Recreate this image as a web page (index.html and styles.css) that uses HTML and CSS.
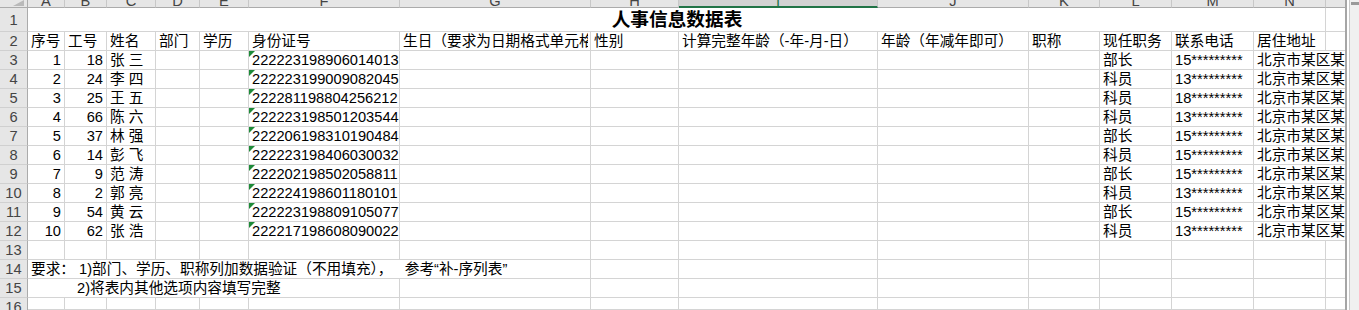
FILE: index.html
```html
<!DOCTYPE html>
<html lang="zh-CN">
<head>
<meta charset="utf-8">
<title>人事信息数据表</title>
<link rel="stylesheet" href="styles.css">
</head>
<body>
<div class="sheet">
  <div class="grid">
    <!-- column headers -->
    <div class="corner"><span class="corner-tri"></span></div>
    <div class="ch"><span>A</span></div>
    <div class="ch"><span>B</span></div>
    <div class="ch"><span>C</span></div>
    <div class="ch"><span>D</span></div>
    <div class="ch"><span>E</span></div>
    <div class="ch"><span>F</span></div>
    <div class="ch"><span>G</span></div>
    <div class="ch"><span>H</span></div>
    <div class="ch sel"><span>I</span></div>
    <div class="ch"><span>J</span></div>
    <div class="ch"><span>K</span></div>
    <div class="ch"><span>L</span></div>
    <div class="ch"><span>M</span></div>
    <div class="ch"><span>N</span></div>
    <div class="ch last"></div>

    <!-- row 1 -->
    <div class="rh r1">1</div>
    <div class="c title">人事信息数据表</div>
    <div class="c last"></div>

    <!-- row 2 -->
    <div class="rh">2</div>
    <div class="c">序号</div>
    <div class="c">工号</div>
    <div class="c">姓名</div>
    <div class="c">部门</div>
    <div class="c">学历</div>
    <div class="c">身份证号</div>
    <div class="c"><span class="clip">生日（要求为日期格式单元格）</span></div>
    <div class="c">性别</div>
    <div class="c">计算完整年龄（-年-月-日）</div>
    <div class="c">年龄（年减年即可）</div>
    <div class="c">职称</div>
    <div class="c">现任职务</div>
    <div class="c">联系电话</div>
    <div class="c">居住地址</div>
    <div class="c last"></div>

    <!-- row 3 -->
    <div class="rh">3</div>
    <div class="c num">1</div><div class="c num">18</div><div class="c name">张 三</div><div class="c"></div><div class="c"></div>
    <div class="c txt">222223198906014013</div><div class="c"></div><div class="c"></div><div class="c"></div><div class="c"></div><div class="c"></div>
    <div class="c">部长</div><div class="c">15*********</div><div class="c addr">北京市某区某街道某号</div>

    <!-- row 4 -->
    <div class="rh">4</div>
    <div class="c num">2</div><div class="c num">24</div><div class="c name">李 四</div><div class="c"></div><div class="c"></div>
    <div class="c txt">222223199009082045</div><div class="c"></div><div class="c"></div><div class="c"></div><div class="c"></div><div class="c"></div>
    <div class="c">科员</div><div class="c">13*********</div><div class="c addr">北京市某区某街道某号</div>

    <!-- row 5 -->
    <div class="rh">5</div>
    <div class="c num">3</div><div class="c num">25</div><div class="c name">王 五</div><div class="c"></div><div class="c"></div>
    <div class="c txt">222281198804256212</div><div class="c"></div><div class="c"></div><div class="c"></div><div class="c"></div><div class="c"></div>
    <div class="c">科员</div><div class="c">18*********</div><div class="c addr">北京市某区某街道某号</div>

    <!-- row 6 -->
    <div class="rh">6</div>
    <div class="c num">4</div><div class="c num">66</div><div class="c name">陈 六</div><div class="c"></div><div class="c"></div>
    <div class="c txt">222223198501203544</div><div class="c"></div><div class="c"></div><div class="c"></div><div class="c"></div><div class="c"></div>
    <div class="c">科员</div><div class="c">13*********</div><div class="c addr">北京市某区某街道某号</div>

    <!-- row 7 -->
    <div class="rh">7</div>
    <div class="c num">5</div><div class="c num">37</div><div class="c name">林 强</div><div class="c"></div><div class="c"></div>
    <div class="c txt">222206198310190484</div><div class="c"></div><div class="c"></div><div class="c"></div><div class="c"></div><div class="c"></div>
    <div class="c">部长</div><div class="c">15*********</div><div class="c addr">北京市某区某街道某号</div>

    <!-- row 8 -->
    <div class="rh">8</div>
    <div class="c num">6</div><div class="c num">14</div><div class="c name">彭 飞</div><div class="c"></div><div class="c"></div>
    <div class="c txt">222223198406030032</div><div class="c"></div><div class="c"></div><div class="c"></div><div class="c"></div><div class="c"></div>
    <div class="c">科员</div><div class="c">15*********</div><div class="c addr">北京市某区某街道某号</div>

    <!-- row 9 -->
    <div class="rh">9</div>
    <div class="c num">7</div><div class="c num">9</div><div class="c name">范 涛</div><div class="c"></div><div class="c"></div>
    <div class="c txt">222202198502058811</div><div class="c"></div><div class="c"></div><div class="c"></div><div class="c"></div><div class="c"></div>
    <div class="c">部长</div><div class="c">15*********</div><div class="c addr">北京市某区某街道某号</div>

    <!-- row 10 -->
    <div class="rh">10</div>
    <div class="c num">8</div><div class="c num">2</div><div class="c name">郭 亮</div><div class="c"></div><div class="c"></div>
    <div class="c txt">222224198601180101</div><div class="c"></div><div class="c"></div><div class="c"></div><div class="c"></div><div class="c"></div>
    <div class="c">科员</div><div class="c">13*********</div><div class="c addr">北京市某区某街道某号</div>

    <!-- row 11 -->
    <div class="rh">11</div>
    <div class="c num">9</div><div class="c num">54</div><div class="c name">黄 云</div><div class="c"></div><div class="c"></div>
    <div class="c txt">222223198809105077</div><div class="c"></div><div class="c"></div><div class="c"></div><div class="c"></div><div class="c"></div>
    <div class="c">部长</div><div class="c">15*********</div><div class="c addr">北京市某区某街道某号</div>

    <!-- row 12 -->
    <div class="rh">12</div>
    <div class="c num">10</div><div class="c num">62</div><div class="c name">张 浩</div><div class="c"></div><div class="c"></div>
    <div class="c txt">222217198608090022</div><div class="c"></div><div class="c"></div><div class="c"></div><div class="c"></div><div class="c"></div>
    <div class="c">科员</div><div class="c">13*********</div><div class="c addr">北京市某区某街道某号</div>

    <!-- row 13 -->
    <div class="rh">13</div>
    <div class="c"></div><div class="c"></div><div class="c"></div><div class="c"></div><div class="c"></div>
    <div class="c"></div><div class="c"></div><div class="c"></div><div class="c"></div><div class="c"></div>
    <div class="c"></div><div class="c"></div><div class="c"></div><div class="c"></div><div class="c last"></div>

    <!-- row 14 -->
    <div class="rh">14</div>
    <div class="c note1">要求： 1)部门、学历、职称列加数据验证（不用填充），   参考“补-序列表”</div>
    <div class="c"></div><div class="c"></div><div class="c"></div><div class="c"></div>
    <div class="c"></div><div class="c"></div><div class="c"></div><div class="c last"></div>

    <!-- row 15 -->
    <div class="rh">15</div>
    <div class="c note2">2)将表内其他选项内容填写完整</div>
    <div class="c"></div><div class="c"></div><div class="c"></div><div class="c"></div><div class="c"></div>
    <div class="c"></div><div class="c"></div><div class="c"></div><div class="c last"></div>

    <!-- row 16 -->
    <div class="rh r16">16</div>
    <div class="c"></div><div class="c"></div><div class="c"></div><div class="c"></div><div class="c"></div>
    <div class="c"></div><div class="c"></div><div class="c"></div><div class="c"></div><div class="c"></div>
    <div class="c"></div><div class="c"></div><div class="c"></div><div class="c"></div><div class="c last"></div>
  </div>
  <div class="vscroll"><span class="split"></span></div>
</div>
</body>
</html>
```

FILE: styles.css
```css
* { box-sizing: border-box; }

html, body {
  margin: 0;
  padding: 0;
  background: #ffffff;
}

body {
  font-family: "Liberation Sans", "Noto Sans CJK SC", sans-serif;
  font-size: 14.67px;
  color: #000;
}

.sheet {
  display: flex;
  width: 1359px;
  height: 310px;
  overflow: hidden;
}

.grid {
  flex: 0 0 1345px;
  display: grid;
  grid-template-columns: 28px 37px 42px 49px 44px 49px 151px 191px 88px 199px 151px 71px 72px 82px 72px 19px;
  grid-template-rows: 8px 24px repeat(14, 19px) 12px;
  overflow: hidden;
}

/* header row */
.corner {
  position: relative;
  background: #e6e6e6;
  border-right: 1px solid #ababab;
  border-bottom: 1px solid #ababab;
}
.corner-tri {
  position: absolute;
  right: 3px;
  bottom: 1px;
  width: 0;
  height: 0;
  border-left: 11px solid transparent;
  border-bottom: 6px solid #b9b9b9;
}

.ch {
  background: #e6e6e6;
  border-right: 1px solid #c8c8c8;
  border-bottom: 1px solid #ababab;
  overflow: hidden;
  text-align: center;
  color: #444;
}
.ch span {
  display: block;
  line-height: 20px;
  margin-top: -9px;
}
.ch.sel {
  background: #d2d2d2;
  border-bottom: 2px solid #217346;
  color: #217346;
}
.ch.last { border-right: none; }

/* row headers */
.rh {
  background: #e6e6e6;
  border-right: 1px solid #ababab;
  border-bottom: 1px solid #d0d0d0;
  color: #444;
  text-align: center;
  line-height: 18px;
  display: flex;
  align-items: flex-end;
  justify-content: center;
  overflow: hidden;
}
.rh.r1 { padding-bottom: 2px; }
.rh.r16 { align-items: flex-start; border-bottom: none; }

/* cells */
.c {
  border-right: 1px solid #d4d4d4;
  border-bottom: 1px solid #d4d4d4;
  padding: 0 2px 0 3px;
  line-height: 18px;
  white-space: pre;
  overflow: hidden;
  display: flex;
  align-items: flex-end;
  position: relative;
}
.c.last { border-right: none; }

.c.num { justify-content: flex-end; padding-right: 3px; }

.clip {
  display: block;
  overflow: hidden;
  max-width: 100%;
}

.title {
  grid-column: span 14;
  justify-content: center;
  font-size: 18.67px;
  font-weight: bold;
  line-height: 22px;
}

.txt::before {
  content: "";
  position: absolute;
  left: 0;
  top: 0;
  width: 0;
  height: 0;
  border-top: 6px solid #1d8a38;
  border-right: 6px solid transparent;
}

.addr {
  grid-column: span 2;
  border-right: none;
}

.note1 { grid-column: span 7; }
.note2 { grid-column: span 6; padding-left: 49px; }

.vscroll {
  position: relative;
  flex: 1 1 auto;
  height: 310px;
  border-left: 2px solid #a6a6a6;
  background: #f0f0f0;
  box-shadow: inset 2px 0 0 #ffffff, inset 3px 0 0 #c8c8c8;
}
.split {
  position: absolute;
  top: 2px;
  left: 4px;
  right: 0;
  height: 3px;
  background: #9a9a9a;
}
```
